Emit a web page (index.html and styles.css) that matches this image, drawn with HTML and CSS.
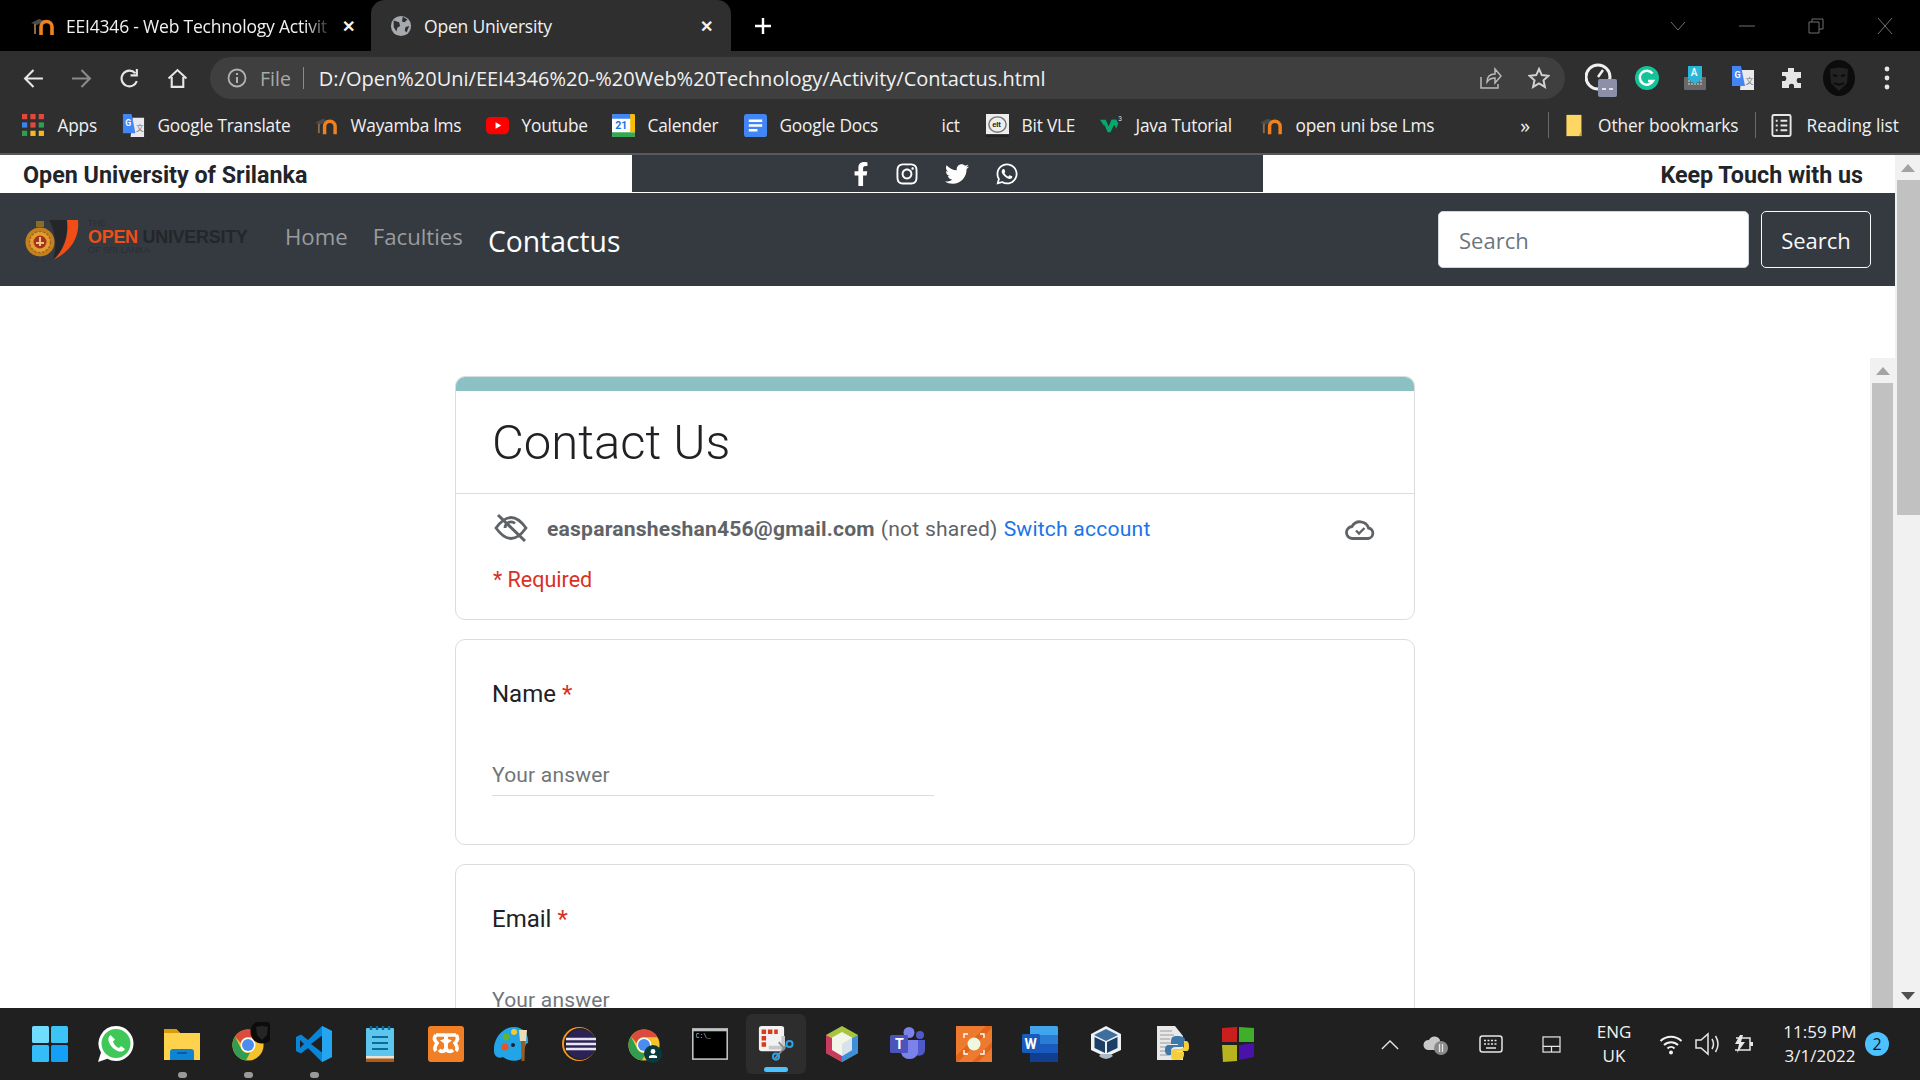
FILE: index.html
```html
<!DOCTYPE html>
<html lang="en">
<head>
  <meta charset="UTF-8" />
  <meta name="viewport" content="width=device-width, initial-scale=1.0" />
  <title>Open University</title>
  <link rel="stylesheet" href="styles.css">
</head>
<body>
  <svg class="defs" aria-hidden="true">
    <symbol id="moodle" viewBox="0 0 24 18">
      <path d="M0 6 8 2l6 2-8 4z" fill="#4a4a4a"/>
      <path d="M4 7v10" stroke="#8a6a4a" stroke-width="2" fill="none"/>
      <path d="M10 18V10a5.500 5.500 0 0 1 11 0v8" stroke="#f0821e" stroke-width="3.600" fill="none"/>
    </symbol>
    <symbol id="translate" viewBox="0 0 24 24">
      <path d="M11 4h12v20H9z" fill="#e8eaed"/>
      <text x="14.5" y="18" font-family="Noto Sans CJK SC" font-size="8" fill="#777">文</text>
      <path d="M1 0h9l4 20H1z" fill="#4285f4"/>
      <text x="3.4" y="12" font-family="Roboto" font-size="9" font-weight="700" fill="#fff">G</text>
    </symbol>
    <symbol id="wa" viewBox="0 0 448 512">
      <path d="M380.9 97.1C339 55.1 283.2 32 223.9 32c-122.4 0-222 99.6-222 222 0 39.1 10.2 77.3 29.6 111L0 480l117.7-30.9c32.4 17.7 68.9 27 106.1 27h.1c122.3 0 224.1-99.6 224.1-222 0-59.3-25.2-115-67.1-157zm-157 341.6c-33.2 0-65.7-8.9-94-25.7l-6.7-4-69.8 18.3L72 359.2l-4.4-7c-18.5-29.4-28.2-63.3-28.2-98.2 0-101.7 82.8-184.5 184.6-184.5 49.3 0 95.6 19.2 130.4 54.1 34.8 34.9 56.2 81.2 56.1 130.5 0 101.8-84.9 184.6-186.6 184.6zm101.2-138.2c-5.5-2.8-32.8-16.2-37.9-18-5.1-1.9-8.8-2.8-12.5 2.8-3.7 5.6-14.3 18-17.6 21.8-3.2 3.7-6.5 4.2-12 1.4-32.6-16.3-54-29.1-75.5-66-5.7-9.8 5.7-9.1 16.3-30.3 1.8-3.7.9-6.9-.5-9.7-1.4-2.8-12.5-30.1-17.1-41.2-4.5-10.8-9.1-9.3-12.5-9.5-3.2-.2-6.9-.2-10.6-.2-3.7 0-9.7 1.4-14.8 6.9-5.1 5.6-19.4 19-19.4 46.3 0 27.3 19.9 53.7 22.6 57.4 2.8 3.7 39.1 59.7 94.8 83.8 35.2 15.2 49 16.5 66.6 13.9 10.7-1.6 32.8-13.4 37.4-26.4 4.6-13 4.6-24.1 3.2-26.4-1.3-2.5-5-3.9-10.5-6.6z"/>
    </symbol>
    <symbol id="chrome" viewBox="0 0 48 48">
      <circle cx="24" cy="24" r="22" fill="#f6c229"/>
      <path d="M24 2a22 22 0 0 1 19 11H24a11 11 0 0 0-10.5 8L5.6 12A22 22 0 0 1 24 2z" fill="#dc4c3e"/>
      <path d="M5.6 12l8.900 17.500A11 11 0 0 0 27 34.600L21 45.800A22 22 0 0 1 5.600 12z" fill="#2f9e52"/>
      <circle cx="24" cy="24" r="10.500" fill="#fff"/>
      <circle cx="24" cy="24" r="8.500" fill="#4a8cf0"/>
    </symbol>
  </svg>

  <div class="tabstrip">
    <div class="tab">
      <svg class="tab-favicon"><use href="#moodle"/></svg>
      <span class="tab-title tab-title-fade">EEI4346 - Web Technology Activit</span>
      <span class="tab-close">✕</span>
    </div>
    <div class="tab tab-active">
      <svg class="tab-globe" viewBox="0 0 24 24"><circle cx="12" cy="12" r="11" fill="#a6a9ad"/><path d="M4 6l6 2 1 4-3 2-1 4-3-5zM14 2l5 3-3 3-3-1zM17 13l4-1-3 7-2-2z" fill="#2f2f2f"/></svg>
      <span class="tab-title">Open University</span>
      <span class="tab-close">✕</span>
    </div>
    <span class="new-tab">
      <svg viewBox="0 0 18 18"><path d="M9 1v16M1 9h16" stroke="#fff" stroke-width="2.400"/></svg>
    </span>
    <div class="window-controls">
      <svg viewBox="0 0 16 16"><path d="M1 4l7 8 7-8" class="win-line"/></svg>
      <svg viewBox="0 0 16 16"><path d="M0 8h16" class="win-line"/></svg>
      <svg viewBox="0 0 16 16"><path d="M1 4h10v11H1zM4 4V1h11v10h-4" class="win-line"/></svg>
      <svg viewBox="0 0 16 16"><path d="M1 0l14 16M15 0L1 16" class="win-line"/></svg>
    </div>
  </div>

  <div class="toolbar">
    <span class="tool-btn"><svg viewBox="0 0 20 20"><path d="M19 10H2M10 2l-8 8 8 8" class="tool-line"/></svg></span>
    <span class="tool-btn"><svg viewBox="0 0 20 20"><path d="M1 10h17M10 2l8 8-8 8" class="tool-line tool-line-dim"/></svg></span>
    <span class="tool-btn"><svg viewBox="0 0 20 20"><path d="M17 12.500A7.500 7.500 0 1 1 15.500 5M17 1v6h-6" class="tool-line"/></svg></span>
    <span class="tool-btn"><svg viewBox="0 0 20 20"><path d="M1.500 10 10 2l8.500 8M4.500 8.500V18h11V8.500" class="tool-line"/></svg></span>
    <div class="omnibox">
      <svg class="info-icon" viewBox="0 0 20 20"><circle cx="10" cy="10" r="8.500" fill="none" stroke="#b0b2b5" stroke-width="1.800"/><path d="M10 9v6M10 5v2" stroke="#b0b2b5" stroke-width="2"/></svg>
      <span class="omni-file">File</span>
      <span class="omni-sep"></span>
      <span class="omni-url">D:/Open%20Uni/EEI4346%20-%20Web%20Technology/Activity/Contactus.html</span>
      <svg class="omni-share" viewBox="0 0 22 22"><path d="M1 10v11h17v-4M7 15c0-6 4-8 8-8V2l6 7-6 7v-5c-3 0-6 1-8 4z" fill="none" stroke="#b9bbbe" stroke-width="1.500"/></svg>
      <svg class="omni-star" viewBox="0 0 22 22"><path d="M11 2l2.800 6.100 6.700.7-5 4.500 1.400 6.600L11 16.500l-5.900 3.400 1.400-6.600-5-4.500 6.700-.7z" fill="none" stroke="#d0d1d3" stroke-width="2"/></svg>
    </div>
    <div class="extensions">
      <span class="ext"><svg class="ext-gauge" viewBox="0 0 32 34"><circle cx="13" cy="14" r="12" fill="none" stroke="#f1f1f1" stroke-width="3"/><path d="M13 14l5-7" stroke="#f1f1f1" stroke-width="2.500"/><rect x="13" y="16" width="19" height="18" rx="2" fill="#8b8fa8"/><path d="M17 26h4M24 26h4" stroke="#fff" stroke-width="1.500"/></svg></span>
      <span class="ext"><svg viewBox="0 0 24 24"><circle cx="12" cy="12" r="12" fill="#15c39a"/><path d="M17.500 7.500A7 7 0 1 0 18 15h-5" fill="none" stroke="#fff" stroke-width="2.500"/></svg></span>
      <span class="ext"><svg viewBox="0 0 24 24"><rect x="1" y="11" width="22" height="13" rx="1" fill="#68696b"/><path d="M5 15h14M5 18h14" stroke="#b5b5b5" stroke-width="1.400" stroke-dasharray="2 1"/><path d="M5 0h14v13l-7 5-7-5z" fill="#29b6d8"/><text x="7.700" y="10" font-family="Roboto" font-size="10" font-weight="500" fill="#fff">A</text></svg></span>
      <span class="ext"><svg class="ext-translate"><use href="#translate"/></svg></span>
      <span class="ext"><svg viewBox="0 0 24 24"><path d="M9 2h6v4h7v6h-3a3 3 0 0 0 0 5h3v5H15v-3a3 3 0 0 0-5 0v3H3v-7h3a3 3 0 0 0 0-5H3V6h6z" fill="#e6e6e6"/></svg></span>
      <span class="ext"><svg class="avatar" viewBox="0 0 32 36"><ellipse cx="16" cy="18" rx="16" ry="18" fill="#0c0c0c"/><path d="M7 9q9-3 18 0l-1 14-8 8-8-8z" fill="#222"/><path d="M10 15l4 1M18 16l4-1M11 23q5 3 10 0" stroke="#0c0c0c" stroke-width="2" fill="none"/></svg></span>
      <span class="ext"><svg class="menu-dots" viewBox="0 0 6 26"><circle cx="3" cy="4" r="2.400" fill="#e6e6e6"/><circle cx="3" cy="13" r="2.400" fill="#e6e6e6"/><circle cx="3" cy="22" r="2.400" fill="#e6e6e6"/></svg></span>
    </div>
  </div>

  <div class="bookmarks">
    <a class="bm">
      <svg class="bm-icon" viewBox="0 0 22 22">
        <g fill="#e2483c"><rect width="5" height="5"/><rect x="8" width="5" height="5"/><rect x="16" width="5" height="5"/></g>
        <rect y="8" width="5" height="5" fill="#3a86e8"/><rect x="8" y="8" width="5" height="5" fill="#e2483c"/><rect x="16" y="8" width="5" height="5" fill="#2f9e52"/>
        <rect y="16" width="5" height="5" fill="#2f9e52"/><rect x="8" y="16" width="5" height="5" fill="#f6b81f"/><rect x="16" y="16" width="5" height="5" fill="#f6b81f"/>
      </svg>Apps</a>
    <a class="bm"><svg class="bm-icon"><use href="#translate"/></svg>Google Translate</a>
    <a class="bm"><svg class="bm-icon"><use href="#moodle"/></svg>Wayamba lms</a>
    <a class="bm"><svg class="bm-icon" viewBox="0 0 24 24"><rect y="3" width="24" height="18" rx="4.500" fill="#f00"/><path d="M10 8.500v7l6-3.500z" fill="#fff"/></svg>Youtube</a>
    <a class="bm"><svg class="bm-icon" viewBox="0 0 24 24"><rect width="24" height="24" rx="2" fill="#fff"/><path d="M0 2a2 2 0 0 1 2-2h20a2 2 0 0 1 2 2v3H0z" fill="#4285f4"/><path d="M0 19h24v3a2 2 0 0 1-2 2H2a2 2 0 0 1-2-2z" fill="#34a853"/><path d="M19 0h3a2 2 0 0 1 2 2v17h-5z" fill="#fbbc04"/><text x="3.500" y="16" font-family="Roboto" font-size="11" font-weight="700" fill="#1a73e8">21</text></svg>Calender</a>
    <a class="bm"><svg class="bm-icon" viewBox="0 0 24 24"><rect width="24" height="24" rx="3" fill="#4285f4"/><path d="M5 7h14M5 12h14M5 17h9" stroke="#fff" stroke-width="2.500"/></svg>Google Docs</a>
    <a class="bm"><span class="bm-icon"></span>ict</a>
    <a class="bm"><svg class="bm-icon" viewBox="0 0 24 24"><rect width="24" height="24" fill="#eee"/><ellipse cx="12" cy="11" rx="9" ry="8" fill="none" stroke="#777" stroke-width="1.500"/><text x="6.500" y="14" font-family="Liberation Sans" font-size="8" font-weight="700" fill="#222">elt</text><rect y="21" width="24" height="3" fill="#222"/></svg>Bit VLE</a>
    <a class="bm"><svg class="bm-icon" viewBox="0 0 24 24"><path d="M0 6h6l3 7 3-7h5l-6 13H8l-3-7-1 0z" fill="#04aa6d"/><path d="M12 6h5l2 4-2 5z" fill="#04aa6d"/><text x="19" y="7" font-family="Roboto" font-size="7" fill="#ddd">3</text></svg>Java Tutorial</a>
    <a class="bm"><svg class="bm-icon"><use href="#moodle"/></svg>open uni bse Lms</a>
    <div class="bm-right">
      <span class="bm-more">»</span>
      <span class="bm-sep"></span>
      <a class="bm bm-folder"><svg class="bm-icon" viewBox="0 0 22 26"><path d="M3 1h17v24H3z" fill="#fdd663"/><path d="M20 19v6h-3z" fill="#c9a53f"/></svg>Other bookmarks</a>
      <span class="bm-sep"></span>
      <a class="bm bm-reading"><svg class="bm-icon" viewBox="0 0 22 24"><rect x="1.500" y="1" width="19" height="22" rx="1.500" fill="none" stroke="#e6e6e6" stroke-width="2"/><path d="M5 7h2M10 7h7M5 12h2M10 12h7M5 17h2M10 17h7" stroke="#e6e6e6" stroke-width="2"/></svg>Reading list</a>
    </div>
  </div>

  <div class="page">
    <div class="page-main">
      <div class="topstrip">
        <h5 class="strip-title">Open University of Srilanka</h5>
        <div class="socials">
          <svg class="social social-fb" viewBox="0 0 320 512"><path d="M279.14 288l14.22-92.66h-88.91v-60.13c0-25.35 12.42-50.06 52.24-50.06h40.42V6.26S260.43 0 225.36 0c-73.22 0-121.08 44.38-121.08 124.72v70.62H22.89V288h81.39v224h100.17V288z"/></svg>
          <svg class="social" viewBox="0 0 448 512"><path d="M224.1 141c-63.6 0-114.9 51.3-114.9 114.9s51.3 114.9 114.9 114.9S339 319.5 339 255.9 287.7 141 224.1 141zm0 189.6c-41.1 0-74.7-33.5-74.7-74.7s33.5-74.7 74.7-74.7 74.7 33.5 74.7 74.7-33.6 74.7-74.7 74.7zm146.4-194.3c0 14.9-12 26.8-26.8 26.8-14.9 0-26.8-12-26.8-26.8s12-26.8 26.8-26.8 26.8 12 26.8 26.8zm76.1 27.2c-1.7-35.9-9.9-67.7-36.2-93.9-26.2-26.2-58-34.4-93.9-36.2-37-2.1-147.9-2.1-184.9 0-35.8 1.7-67.6 9.9-93.9 36.1s-34.4 58-36.2 93.9c-2.1 37-2.1 147.9 0 184.9 1.7 35.9 9.9 67.7 36.2 93.9s58 34.4 93.9 36.2c37 2.1 147.9 2.1 184.9 0 35.9-1.7 67.7-9.9 93.9-36.2 26.2-26.2 34.4-58 36.2-93.9 2.1-37 2.1-147.8 0-184.8zM398.8 388c-7.8 19.6-22.9 34.7-42.6 42.6-29.5 11.7-99.5 9-132.1 9s-102.7 2.6-132.1-9c-19.6-7.8-34.7-22.9-42.6-42.6-11.7-29.5-9-99.5-9-132.1s-2.6-102.7 9-132.1c7.8-19.6 22.9-34.7 42.6-42.6 29.5-11.7 99.5-9 132.1-9s102.7-2.6 132.1 9c19.6 7.8 34.7 22.9 42.6 42.6 11.7 29.5 9 99.5 9 132.1s2.7 102.7-9 132.1z"/></svg>
          <svg class="social" viewBox="0 0 512 512"><path d="M459.37 151.716c.325 4.548.325 9.097.325 13.645 0 138.72-105.583 298.558-298.558 298.558-59.452 0-114.68-17.219-161.137-47.106 8.447.974 16.568 1.299 25.34 1.299 49.055 0 94.213-16.568 130.274-44.832-46.132-.975-84.792-31.188-98.112-72.772 6.498.974 12.995 1.624 19.818 1.624 9.421 0 18.843-1.3 27.614-3.573-48.081-9.747-84.143-51.98-84.143-102.985v-1.299c13.969 7.797 30.214 12.67 47.431 13.319-28.264-18.843-46.781-51.005-46.781-87.391 0-19.492 5.197-37.36 14.294-52.954 51.655 63.675 129.3 105.258 216.365 109.807-1.624-7.797-2.599-15.918-2.599-24.04 0-57.828 46.782-104.934 104.934-104.934 30.213 0 57.502 12.67 76.67 33.137 23.715-4.548 46.456-13.32 66.599-25.34-7.798 24.366-24.366 44.833-46.132 57.827 21.117-2.273 41.584-8.122 60.426-16.243-14.292 20.791-32.161 39.308-52.628 54.253z"/></svg>
          <svg class="social"><use href="#wa"/></svg>
        </div>
        <h5 class="strip-touch">Keep Touch with us</h5>
      </div>

      <nav class="navbar">
        <div class="brand">
          <svg class="brand-mark" viewBox="0 0 54 40">
            <path d="M11 1h8v6h-8z" fill="#8a6c2a"/>
            <circle cx="15" cy="22" r="14.500" fill="#c4801f"/>
            <circle cx="15" cy="22" r="10.500" fill="#e0a030" stroke="#a8641a" stroke-width="1.500" stroke-dasharray="2.500 1.500"/>
            <circle cx="15" cy="22" r="6.500" fill="#a83020"/>
            <path d="M15 17v9M11 23h8" stroke="#e8c878" stroke-width="2"/>
            <path d="M24 0h18c2 16-5 32-14 40 4-12 3-28-4-40z" fill="#25262a"/>
            <path d="M42 0h11c2 18-8 32-25 40 11-9 16-24 14-40z" fill="#f04e16"/>
          </svg>
          <div class="brand-text">
            <span class="brand-the">THE</span>
            <span class="brand-name"><b class="brand-open">OPEN</b> UNIVERSITY</span>
            <span class="brand-the">OF SRI LANKA</span>
          </div>
        </div>
        <a class="nav-link">Home</a>
        <a class="nav-link">Faculties</a>
        <a class="nav-link nav-active">Contactus</a>
        <form class="nav-search">
          <input class="search-input" type="text" placeholder="Search" />
          <button class="search-btn" type="button">Search</button>
        </form>
      </nav>

      <div class="frame">
        <div class="frame-body">
          <div class="form-card form-head">
            <div class="head-accent"></div>
            <h1 class="form-title">Contact Us</h1>
            <div class="head-info">
              <div class="account-row">
                <svg class="eye-off" viewBox="0 0 36 30"><path d="M3 15q15-21 30 0-15 21-30 0z" fill="none" stroke="#5f6368" stroke-width="2.800"/><path d="M12 15a6 6 0 0 1 10-4.500" fill="none" stroke="#5f6368" stroke-width="2.800"/><path d="M5 2l27 26" stroke="#5f6368" stroke-width="3"/></svg>
                <span class="account-mail">easparansheshan456@gmail.com</span>
                <span class="account-note">(not shared)</span>
                <a class="account-switch">Switch account</a>
                <svg class="cloud-ok" viewBox="0 0 30 22"><path d="M8 20.500a6 6 0 0 1-1-12 9 9 0 0 1 16.500 1.500 5.300 5.300 0 0 1-.5 10.500z" fill="none" stroke="#5f6368" stroke-width="2.800"/><path d="M11 12.500l3 3 5.500-5.500" fill="none" stroke="#5f6368" stroke-width="2.400"/></svg>
              </div>
              <p class="required-note">* Required</p>
            </div>
          </div>

          <div class="form-card question">
            <label class="q-label">Name <span class="q-star">*</span></label>
            <div class="q-answer">Your answer</div>
          </div>

          <div class="form-card question">
            <label class="q-label">Email <span class="q-star">*</span></label>
            <div class="q-answer">Your answer</div>
          </div>
        </div>
        <div class="scrollbar scrollbar-inner">
          <span class="scroll-arrow"></span>
          <div class="scroll-thumb scroll-thumb-full"></div>
        </div>
      </div>
    </div>
    <div class="scrollbar scrollbar-outer">
      <span class="scroll-arrow"></span>
      <div class="scroll-thumb scroll-thumb-outer"></div>
      <span class="scroll-arrow scroll-arrow-down"></span>
    </div>
  </div>

  <div class="taskbar">
    <span class="task">
      <svg viewBox="0 0 36 36"><rect width="17" height="17" rx="1.500" fill="#6fdcfb"/><rect x="19" width="17" height="17" rx="1.500" fill="#3cc4f7"/><rect y="19" width="17" height="17" rx="1.500" fill="#35bdf7"/><rect x="19" y="19" width="17" height="17" rx="1.500" fill="#14a0f6"/></svg>
    </span>
    <span class="task">
      <svg viewBox="0 0 36 36"><path d="M18 0a17.500 17.500 0 0 1 0 35c-3 0-6-.8-8.500-2.200L0 36l3-9.500A17.500 17.500 0 0 1 18 0z" fill="#fff"/><circle cx="18" cy="17.500" r="14.500" fill="#3fc858"/><path d="M12.500 9c-1.500 1-2.500 3-2 5.500 1 5 6 10 11 11 2.500.4 4.500-.5 5.500-2.500l-4-3-2 2c-3-1-5-3.500-6-6.500l2-2z" fill="#fff"/></svg>
    </span>
    <span class="task task-open">
      <svg viewBox="0 0 36 36"><path d="M0 3h12l4 4h20v27H0z" fill="#ffd24d"/><path d="M0 3h12l4 4H0z" fill="#d99c0a"/><path d="M6 26a3 3 0 0 1 3-3h18a3 3 0 0 1 3 3v8H6z" fill="#0f83d4"/><path d="M13 27h10" stroke="#0b4f8f" stroke-width="1.500"/></svg>
    </span>
    <span class="task task-open">
      <svg class="task-chrome" viewBox="0 0 44 44"><use href="#chrome" x="5" y="6" width="34" height="34"/><circle cx="36" cy="10" r="11.500" fill="#0c0c0c"/><path d="M30 5q6-2 12 0l-1 8-5 5-5-5z" fill="#252525"/></svg>
    </span>
    <span class="task task-open">
      <svg viewBox="0 0 36 36"><path d="M26 0l10 5v26l-10 5-14-14-7 5.500L0 25v-14l5-2.500 7 5.500z" fill="#0a84d6"/><path d="M26 0l10 5v26l-10 5z" fill="#23a5f0"/><path d="M26 9.500 15 18l11 8.500z" fill="#202020"/><path d="M4 14v8l4-4z" fill="#202020"/></svg>
    </span>
    <span class="task">
      <svg viewBox="0 0 28 36"><rect y="2" width="28" height="34" rx="1" fill="#5dc6ec"/><path d="M0 30h28v6H0z" fill="#b25a12"/><path d="M0 30h28v2.500H0z" fill="#e9e4da"/><path d="M6 11h16M6 17h16M6 23h16" stroke="#0c6b9a" stroke-width="2"/><path d="M5 0v4M11 0v4M17 0v4M23 0v4" stroke="#0c6b9a" stroke-width="2.500"/></svg>
    </span>
    <span class="task">
      <svg viewBox="0 0 36 36"><rect width="36" height="36" rx="3" fill="#f07f26"/><path d="M8 9h8c3 0 3 5 0 6 3 2 3 8 0 10q-3 1-5-1M8 9c-3 3-1 6 1 8-2 3-3 6-1 8M28 9h-8c-3 0-3 5 0 6-3 2-3 8 0 10q3 1 5-1M28 9c3 3 1 6-1 8 2 3 3 6 1 8" fill="none" stroke="#fff" stroke-width="3.600"/></svg>
    </span>
    <span class="task">
      <svg viewBox="0 0 36 36"><path d="M20 1c10 0 15 8 14 16l-2 1-5 15c-5 3-13 2-18-2-5 2-9-1-9-6-1-12 8-24 20-24z" fill="#22a5e6"/><circle cx="11" cy="21" r="3.500" fill="#e9531f"/><circle cx="12" cy="11" r="3.400" fill="#62b530"/><circle cx="20" cy="6" r="3" fill="#f6c92f"/><circle cx="19" cy="19" r="2" fill="#123"/><path d="M27 15h4l-.5 20h-3z" fill="#9a5b22"/><path d="M25 4h8l-1 11h-6z" fill="#ecdcb6"/></svg>
    </span>
    <span class="task">
      <svg viewBox="0 0 36 36"><circle cx="19" cy="18" r="17" fill="#f7941e"/><circle cx="20" cy="18" r="16" fill="#202020"/><circle cx="21" cy="18" r="15" fill="#2c2255"/><path d="M6 13h30M6 18h30M6 23h30" stroke="#e7e5f0" stroke-width="2.400"/></svg>
    </span>
    <span class="task">
      <svg class="task-chrome" viewBox="0 0 44 44"><use href="#chrome" x="5" y="6" width="34" height="34"/><circle cx="31" cy="32" r="9" fill="#0b3a3e"/><circle cx="31" cy="29.500" r="2.400" fill="#fff"/><path d="M27 36v-2q4-2 8 0v2z" fill="#fff"/></svg>
    </span>
    <span class="task">
      <svg viewBox="0 0 34 30"><rect width="34" height="30" fill="#bfc2c4"/><rect x="1.500" y="3" width="31" height="25.500" fill="#000"/><text x="3.500" y="9.500" font-family="Liberation Mono" font-size="6" fill="#ccc">C:\_</text></svg>
    </span>
    <span class="task task-active">
      <svg viewBox="0 0 40 40"><rect x="1" y="0" width="28" height="28" rx="3" fill="#f2f2f2"/><path d="M4 4h5v5H4zM11 4h5v5h-5zM18 4h4v5h-4zM4 11h5v5H4zM4 18h5v5H4z" fill="#d83b1e"/><path d="M12 24h16V11" fill="none" stroke="#c8c8c8" stroke-width="4"/><path d="M19 36 31 22M23 18l7 8" stroke="#8a8a8a" stroke-width="2"/><circle cx="20" cy="34" r="3.400" fill="none" stroke="#2aa3e8" stroke-width="2.200"/><circle cx="35" cy="20" r="3.400" fill="none" stroke="#2aa3e8" stroke-width="2.200"/></svg>
    </span>
    <span class="task">
      <svg viewBox="0 0 32 36"><path d="M16 0l16 9v18l-16 9L0 27V9z" fill="#a8c440"/><path d="M0 9l16 9v18L0 27z" fill="#c93a5e"/><path d="M32 9L16 18v18l16-9z" fill="#3d8fdc"/><path d="M16 6l10 5.500V24l-10 6-10-6V11.500z" fill="#f2f6e8"/><path d="M16 18l10-6.500V24l-10 6z" fill="#d7e2ea"/></svg>
    </span>
    <span class="task">
      <svg viewBox="0 0 36 36"><circle cx="19" cy="6.500" r="5.500" fill="#7b83eb"/><circle cx="30" cy="9" r="4" fill="#5059c9"/><path d="M26 14h9v10a6 6 0 0 1-9 5z" fill="#5059c9"/><path d="M11 14h17v13a9 9 0 0 1-17 0z" fill="#7b83eb"/><rect y="9" width="18" height="18" rx="1.500" fill="#4b53bc"/><text x="5" y="23" font-family="Roboto" font-size="14" font-weight="700" fill="#fff">T</text></svg>
    </span>
    <span class="task">
      <svg viewBox="0 0 36 36"><rect width="36" height="36" fill="#ee7a2f"/><path d="M0 30 30 0h6v2L2 36H0zM16 36 36 16v6L22 36z" fill="#e2651c"/><circle cx="18" cy="18" r="6.500" fill="#eef7df"/><path d="M8 12V8h4M24 8h4v4M28 24v4h-4M12 28H8v-4" fill="none" stroke="#fff" stroke-width="1.400"/></svg>
    </span>
    <span class="task">
      <svg viewBox="0 0 36 36"><rect x="8" width="28" height="36" rx="2" fill="#2b7cd3"/><path d="M8 0h26a2 2 0 0 1 2 2v7H8z" fill="#41a5ee"/><path d="M8 18h28v9H8z" fill="#185abd"/><path d="M8 27h28v7a2 2 0 0 1-2 2H10a2 2 0 0 1-2-2z" fill="#103f91"/><rect y="8" width="18" height="19" rx="1.500" fill="#185abd"/><text x="2.500" y="22.500" font-family="Roboto" font-size="14" font-weight="700" fill="#fff">W</text></svg>
    </span>
    <span class="task">
      <svg viewBox="0 0 32 36"><path d="M16 0l15 8v16L16 31 1 24V8z" fill="#eef1f5"/><path d="M16 3l12 6-12 6L4 9z" fill="#3f6f9e"/><path d="M4.500 11 15 16v11L4.500 22zM27.500 11 17 16v11l10.500-5z" fill="#1c3f66"/><path d="M9 30q7 6 14 0l-2-2H11z" fill="#aeb9c8"/></svg>
    </span>
    <span class="task">
      <svg viewBox="0 0 34 36"><path d="M2 0h18l8 10v24H2z" fill="#e9e9e9"/><path d="M5 5h12M5 9h14M5 13h10M5 17h12M5 21h9M5 25h12M5 29h10" stroke="#999" stroke-width="1.100"/><path d="M22 10c-5 0-6 2-6 6v2h7v1h-9c-3 0-4 2-4 5s1 5 4 5h2v-4c0-3 2-4 5-4h5c2 0 4-2 4-4v-3c0-3-3-4-8-4z" fill="#3b77a8"/><path d="M22 34c5 0 7-2 7-6v-2h-7v-1h9c3 0 3-2 3-5s-1-5-3-5h-2v4c0 3-2 4-5 4h-5c-2 0-3 2-3 4v3c0 3 1 4 6 4z" fill="#f5cd3d"/></svg>
    </span>
    <span class="task">
      <svg viewBox="0 0 34 36"><path d="M1 2l15-1v15H1z" fill="#c9201d"/><path d="M18 1l15 1v14H18z" fill="#3fae2a"/><path d="M1 19h15v16L2 36z" fill="#b7b41d"/><path d="M18 19l15-2v14l-15 3z" fill="#4a12ab"/></svg>
    </span>

    <div class="tray">
      <span class="tray-cell"><svg class="tray-chevron" viewBox="0 0 20 12"><path d="M1 11l9-9 9 9" fill="none" stroke="#e6e6e6" stroke-width="1.500"/></svg></span>
      <span class="tray-cell"><svg class="tray-cloud" viewBox="0 0 26 22"><path d="M5 17a5 5 0 0 1 1-10 6 6 0 0 1 11 0l-1 10z" fill="#c9c9c9"/><circle cx="18" cy="15" r="7" fill="#8a8a8a"/><path d="M16.500 11v8M19.500 11v8" stroke="#e6e6e6" stroke-width="1.300"/></svg></span>
      <span class="tray-cell"><svg class="tray-key" viewBox="0 0 24 18"><rect x="1" y="1" width="22" height="16" rx="2.500" fill="none" stroke="#e6e6e6" stroke-width="1.500"/><path d="M5 5.500h14M5 9h14" stroke="#e6e6e6" stroke-width="1.500" stroke-dasharray="2 1.500"/><path d="M7 13h10" stroke="#e6e6e6" stroke-width="1.500"/></svg></span>
      <span class="tray-cell"><svg class="tray-layout" viewBox="0 0 20 18"><rect x="1" y="1" width="18" height="16" fill="none" stroke="#e6e6e6" stroke-width="1.300"/><path d="M1 11h18M10 11v6" stroke="#e6e6e6" stroke-width="1.300"/></svg></span>
      <span class="tray-cell tray-text"><span>ENG</span><span>UK</span></span>
      <span class="tray-cell"><svg class="tray-wifi" viewBox="0 0 24 22"><path d="M1.500 8a15 15 0 0 1 21 0M5 12a10 10 0 0 1 14 0M8.500 15.500a5 5 0 0 1 7 0" fill="none" stroke="#f1f1f1" stroke-width="2"/><circle cx="12" cy="19.500" r="2" fill="#f1f1f1"/></svg></span>
      <span class="tray-cell"><svg class="tray-sound" viewBox="0 0 26 24"><path d="M2 8h5l7-6v20l-7-6H2z" fill="none" stroke="#e6e6e6" stroke-width="1.500"/><path d="M18 7q3 5 0 10M21.500 4q5 8 0 16" fill="none" stroke="#e6e6e6" stroke-width="1.500"/></svg></span>
      <span class="tray-cell"><svg class="tray-batt" viewBox="3 0 26 20"><path d="M8 4h14v12H7" fill="none" stroke="#e6e6e6" stroke-width="1.500"/><path d="M22 8h3v4h-3" fill="#e6e6e6"/><path d="M12 1 7 10h4l-2 9 8-11h-4l2-7z" fill="#e6e6e6"/></svg></span>
      <span></span>
      <span class="tray-cell tray-text tray-clock"><span>11:59 PM</span><span>3/1/2022</span></span>
      <span class="notify-badge">2</span>
    </div>
  </div>
</body>
</html>
```

FILE: styles.css
```css
* {
  box-sizing: border-box;
}
html, body {
  height: 100%;
}
body {
  margin: 0;
  display: flex;
  flex-direction: column;
  height: 1080px;
  overflow: hidden;
  font-family: 'Open Sans', 'Liberation Sans', sans-serif;
  background-color: white;
}
.defs {
  display: none;
}

/* browser chrome */
.tabstrip {
  display: flex;
  flex: none;
  height: 51px;
  background-color: #000;
  color: #f1f1f1;
  font-size: 17.500px;
}
.tab {
  position: relative;
  display: flex;
  align-items: center;
  width: 371px;
  padding-left: 31px;
}
.tab-active {
  width: 360px;
  padding-left: 19px;
  background-color: #2f2f2f;
  border-radius: 14px 14px 0 0;
}
.tab-favicon {
  width: 24px;
  height: 18px;
  flex: none;
}
.tab-globe {
  width: 22px;
  height: 22px;
  flex: none;
}
.tab-title {
  flex: 1;
  margin-left: 11px;
  white-space: nowrap;
  overflow: hidden;
  letter-spacing: -0.2px;
}
.tab-active .tab-title {
  margin-left: 12px;
}
.tab-title-fade {
  -webkit-mask-image: linear-gradient(to right, black 90%, transparent);
  mask-image: linear-gradient(to right, black 90%, transparent);
}
.tab-close {
  width: 16px;
  margin: 0 15px 0 8px;
  font-size: 16px;
  font-weight: 700;
  text-align: center;
}
.tab-active .tab-close {
  margin-right: 17px;
}
.new-tab {
  display: flex;
  align-items: center;
  margin-left: 23px;
}
.new-tab svg {
  width: 18px;
  height: 18px;
}
.window-controls {
  display: flex;
  align-items: center;
  margin-left: auto;
  margin-right: 27px;
  gap: 53px;
}
.window-controls svg {
  width: 16px;
  height: 16px;
}
.win-line {
  fill: none;
  stroke: #6f6f6f;
  stroke-width: 1;
}

.toolbar {
  display: flex;
  align-items: center;
  flex: none;
  height: 52px;
  padding: 2px 0 0 9px;
  background-color: #2f2f2f;
}
.tool-btn {
  display: flex;
  justify-content: center;
  width: 48px;
}
.tool-btn svg {
  width: 21px;
  height: 21px;
}
.tool-line {
  fill: none;
  stroke: #e6e6e6;
  stroke-width: 2;
}
.tool-line-dim {
  stroke: #8a8a8a;
}
.omnibox {
  display: flex;
  align-items: center;
  width: 1355px;
  height: 42px;
  margin-left: 9px;
  padding-left: 17px;
  border-radius: 21px;
  background-color: #3f3f3f;
  color: #f1f1f1;
  font-size: 20px;
}
.info-icon {
  width: 20px;
  height: 20px;
}
.omni-file {
  margin-left: 13px;
  color: #a8a9ab;
  font-size: 19.500px;
}
.omni-sep {
  width: 1px;
  height: 22px;
  margin: 0 15px 0 12px;
  background-color: #8a8a8a;
}
.omni-url {
  flex: 1;
  white-space: nowrap;
}
.omni-share {
  width: 22px;
  height: 22px;
  margin-right: 26px;
}
.omni-star {
  width: 22px;
  height: 22px;
  margin-right: 15px;
}
.extensions {
  display: grid;
  grid-template-columns: 45px repeat(6, 48px);
  margin-left: 13px;
}
.ext {
  display: flex;
  justify-content: center;
  align-items: center;
}
.ext svg {
  width: 24px;
  height: 24px;
}
.ext .ext-gauge {
  width: 32px;
  height: 34px;
  margin-top: 4px;
}
.ext .avatar {
  width: 32px;
  height: 36px;
}
.ext .menu-dots {
  width: 6px;
  height: 26px;
}

.bookmarks {
  display: grid;
  grid-template-columns: 100px 193px 171px 126px 132px 162px 80px 114px 160px 250px 1fr;
  align-items: center;
  flex: none;
  height: 52px;
  padding: 0 0 6px 22px;
  background-color: #2f2f2f;
  border-bottom: 2px solid #58595b;
  color: #f1f1f1;
  font-size: 17.300px;
}
.bm {
  display: flex;
  align-items: center;
  gap: 12.500px;
  white-space: nowrap;
  letter-spacing: -0.2px;
}
.bm-icon {
  width: 23px;
  height: 23px;
  flex: none;
}
.bm-right {
  display: flex;
  align-items: center;
  justify-content: flex-end;
}
.bm-more {
  font-size: 20px;
  margin-right: 18px;
}
.bm-sep {
  width: 1px;
  height: 26px;
  background-color: #6a6a6a;
}
.bm-folder {
  gap: 13px;
  margin: 0 16px 0 13px;
  letter-spacing: -0.1px;
}
.bm-reading {
  gap: 14px;
  margin: 0 21px 0 14px;
  letter-spacing: 0;
}

/* page */
.page {
  display: flex;
  flex: 1;
  min-height: 0;
}
.page-main {
  display: flex;
  flex-direction: column;
  flex: 1;
  min-width: 0;
}
.topstrip {
  display: grid;
  grid-template-columns: 632px 631px 1fr;
  align-items: center;
  flex: none;
  height: 38px;
  color: #212529;
}
.strip-title, .strip-touch {
  margin: 0;
  padding-top: 2px;
  font-family: Roboto, 'Liberation Sans', sans-serif;
  font-size: 23.300px;
  font-weight: 700;
}
.strip-title {
  padding-left: 23px;
}
.strip-touch {
  padding-right: 32px;
  text-align: right;
}
.socials {
  display: flex;
  align-items: center;
  height: 37px;
  align-self: start;
  padding-left: 217px;
  gap: 22px;
  background-color: #343a40;
}
.social {
  width: 24px;
  height: 24px;
  fill: white;
}
.social:nth-child(n+3) {
  margin-left: 4px;
}
.navbar {
  display: flex;
  align-items: center;
  flex: none;
  height: 93px;
  padding: 0 24px 0 25px;
  background-color: #343a40;
}
.brand {
  display: flex;
  align-items: center;
  width: 260px;
}
.brand-mark {
  width: 54px;
  height: 40px;
  flex: none;
}
.brand-text {
  display: flex;
  flex-direction: column;
  margin: -5px 0 0 9px;
  color: #25262a;
  font-family: 'Liberation Sans', sans-serif;
  line-height: 1;
}
.brand-the {
  font-size: 9px;
  opacity: 0.6;
}
.brand-name {
  font-size: 18px;
  font-weight: 700;
  letter-spacing: -0.3px;
  white-space: nowrap;
}
.brand-open {
  color: #f04e16;
}
.nav-link {
  margin: 0 25px 7px 0;
  color: #9a9c9f;
  font-size: 22.200px;
}
.nav-active {
  color: white;
  font-size: 28.300px;
  margin: 2px 0 0;
}
.nav-search {
  display: flex;
  margin-left: auto;
  gap: 12px;
}
.search-input {
  width: 311px;
  height: 57px;
  padding: 0 20px;
  border: 1px solid #ced4da;
  border-radius: 5px;
  background-color: white;
  font-family: inherit;
  font-size: 22px;
}
.search-input::placeholder {
  color: #6c757d;
  opacity: 1;
}
.search-btn {
  width: 110px;
  height: 57px;
  border: 1px solid #f8f9fa;
  border-radius: 5px;
  background-color: transparent;
  color: #f8f9fa;
  font-family: inherit;
  font-size: 22px;
}
.frame {
  display: flex;
  flex: 1;
  min-height: 0;
  margin-top: 72px;
}
.frame-body {
  display: flex;
  flex-direction: column;
  align-items: center;
  gap: 19px;
  flex: 1;
  padding-top: 18px;
  overflow: hidden;
  font-family: Roboto, sans-serif;
}
.form-card {
  flex: none;
  width: 960px;
  border: 1px solid #dadce0;
  border-radius: 10px;
  background-color: white;
}
.form-head {
  height: 244px;
  overflow: hidden;
}
.head-accent {
  height: 15px;
  margin: -1px -1px 0;
  background-color: #8cc1c4;
}
.form-title {
  height: 103px;
  margin: 0;
  padding: 20px 0 0 36px;
  border-bottom: 1px solid #dadce0;
  color: #202124;
  font-size: 49px;
  font-weight: 300;
  line-height: 64px;
}
.head-info {
  padding: 19px 39px 0 37px;
}
.account-row {
  display: flex;
  align-items: center;
  height: 30px;
  font-size: 21.100px;
  color: #5f6368;
  letter-spacing: 0.2px;
}
.eye-off {
  width: 36px;
  height: 30px;
  margin-right: 18px;
}
.account-mail {
  font-weight: 700;
}
.account-note {
  margin-left: 6px;
}
.account-switch {
  margin-left: 6px;
  color: #1a73e8;
}
.cloud-ok {
  width: 30px;
  height: 22px;
  margin: 2px 0 0 auto;
}
.required-note {
  margin: 22px 0 0;
  color: #d93025;
  font-size: 21.500px;
  line-height: 30px;
}
.question {
  height: 206px;
  padding: 37px 0 0 36px;
}
.q-label {
  display: block;
  color: #202124;
  font-size: 24px;
  line-height: 34px;
}
.q-star {
  color: #d93025;
}
.q-answer {
  width: 442px;
  height: 39px;
  margin-top: 46px;
  border-bottom: 1px solid #dadce0;
  color: #70757a;
  font-size: 21px;
  line-height: 36px;
  letter-spacing: 0.2px;
}

/* scrollbars */
.scrollbar {
  display: flex;
  flex-direction: column;
  align-items: center;
  flex: none;
  width: 25px;
  background-color: #f1f1f1;
}
.scroll-arrow {
  flex: none;
  width: 0;
  height: 0;
  margin: 9px 0 8px;
  border-left: 7px solid transparent;
  border-right: 7px solid transparent;
  border-bottom: 8px solid #a3a3a3;
}
.scroll-arrow-down {
  margin: auto 0 8px;
  border-bottom: 0;
  border-top: 8px solid #505050;
}
.scroll-thumb {
  background-color: #c1c1c1;
}
.scroll-thumb-full {
  flex: 1;
  width: 21px;
}
.scroll-thumb-outer {
  align-self: flex-end;
  width: 23px;
  height: 335px;
}

/* windows taskbar */
.taskbar {
  display: flex;
  align-items: center;
  flex: none;
  height: 72px;
  padding-left: 17px;
  background-color: #202020;
}
.task {
  position: relative;
  display: flex;
  justify-content: center;
  align-items: center;
  width: 66px;
  height: 60px;
}
.task svg {
  width: 36px;
  height: 36px;
}
.task .task-chrome {
  width: 44px;
  height: 44px;
}
.task-open::after {
  content: "";
  position: absolute;
  left: 29px;
  bottom: -4px;
  width: 9px;
  height: 6px;
  border-radius: 3px;
  background-color: #9a9a9a;
}
.task-active {
  width: 60px;
  margin: 0 3px;
  border-radius: 6px;
  background-color: #2d2d2d;
}
.task-active::after {
  content: "";
  position: absolute;
  left: 18px;
  bottom: 2px;
  width: 24px;
  height: 5px;
  border-radius: 3px;
  background-color: #4cc2ff;
}
.tray {
  display: grid;
  grid-template-columns: 46px 46px 64px 56px 70px 44px 28px 46px 8px 90px 24px;
  align-items: center;
  margin-left: auto;
  margin-right: 31px;
  color: #f1f1f1;
  font-size: 17px;
}
.tray-cell {
  display: flex;
  justify-content: center;
  align-items: center;
}
.tray-text {
  flex-direction: column;
  line-height: 24px;
}
.tray-chevron {
  width: 18px;
  height: 11px;
}
.tray-cloud {
  width: 26px;
  height: 22px;
}
.tray-key {
  width: 24px;
  height: 18px;
}
.tray-layout {
  width: 19px;
  height: 17px;
}
.tray-wifi {
  width: 24px;
  height: 22px;
}
.tray-sound {
  width: 26px;
  height: 24px;
}
.tray-batt {
  width: 26px;
  height: 20px;
}
.notify-badge {
  width: 24px;
  height: 24px;
  border-radius: 50%;
  background-color: #4cc2ff;
  color: #111;
  font-size: 16px;
  line-height: 24px;
  text-align: center;
}
```
